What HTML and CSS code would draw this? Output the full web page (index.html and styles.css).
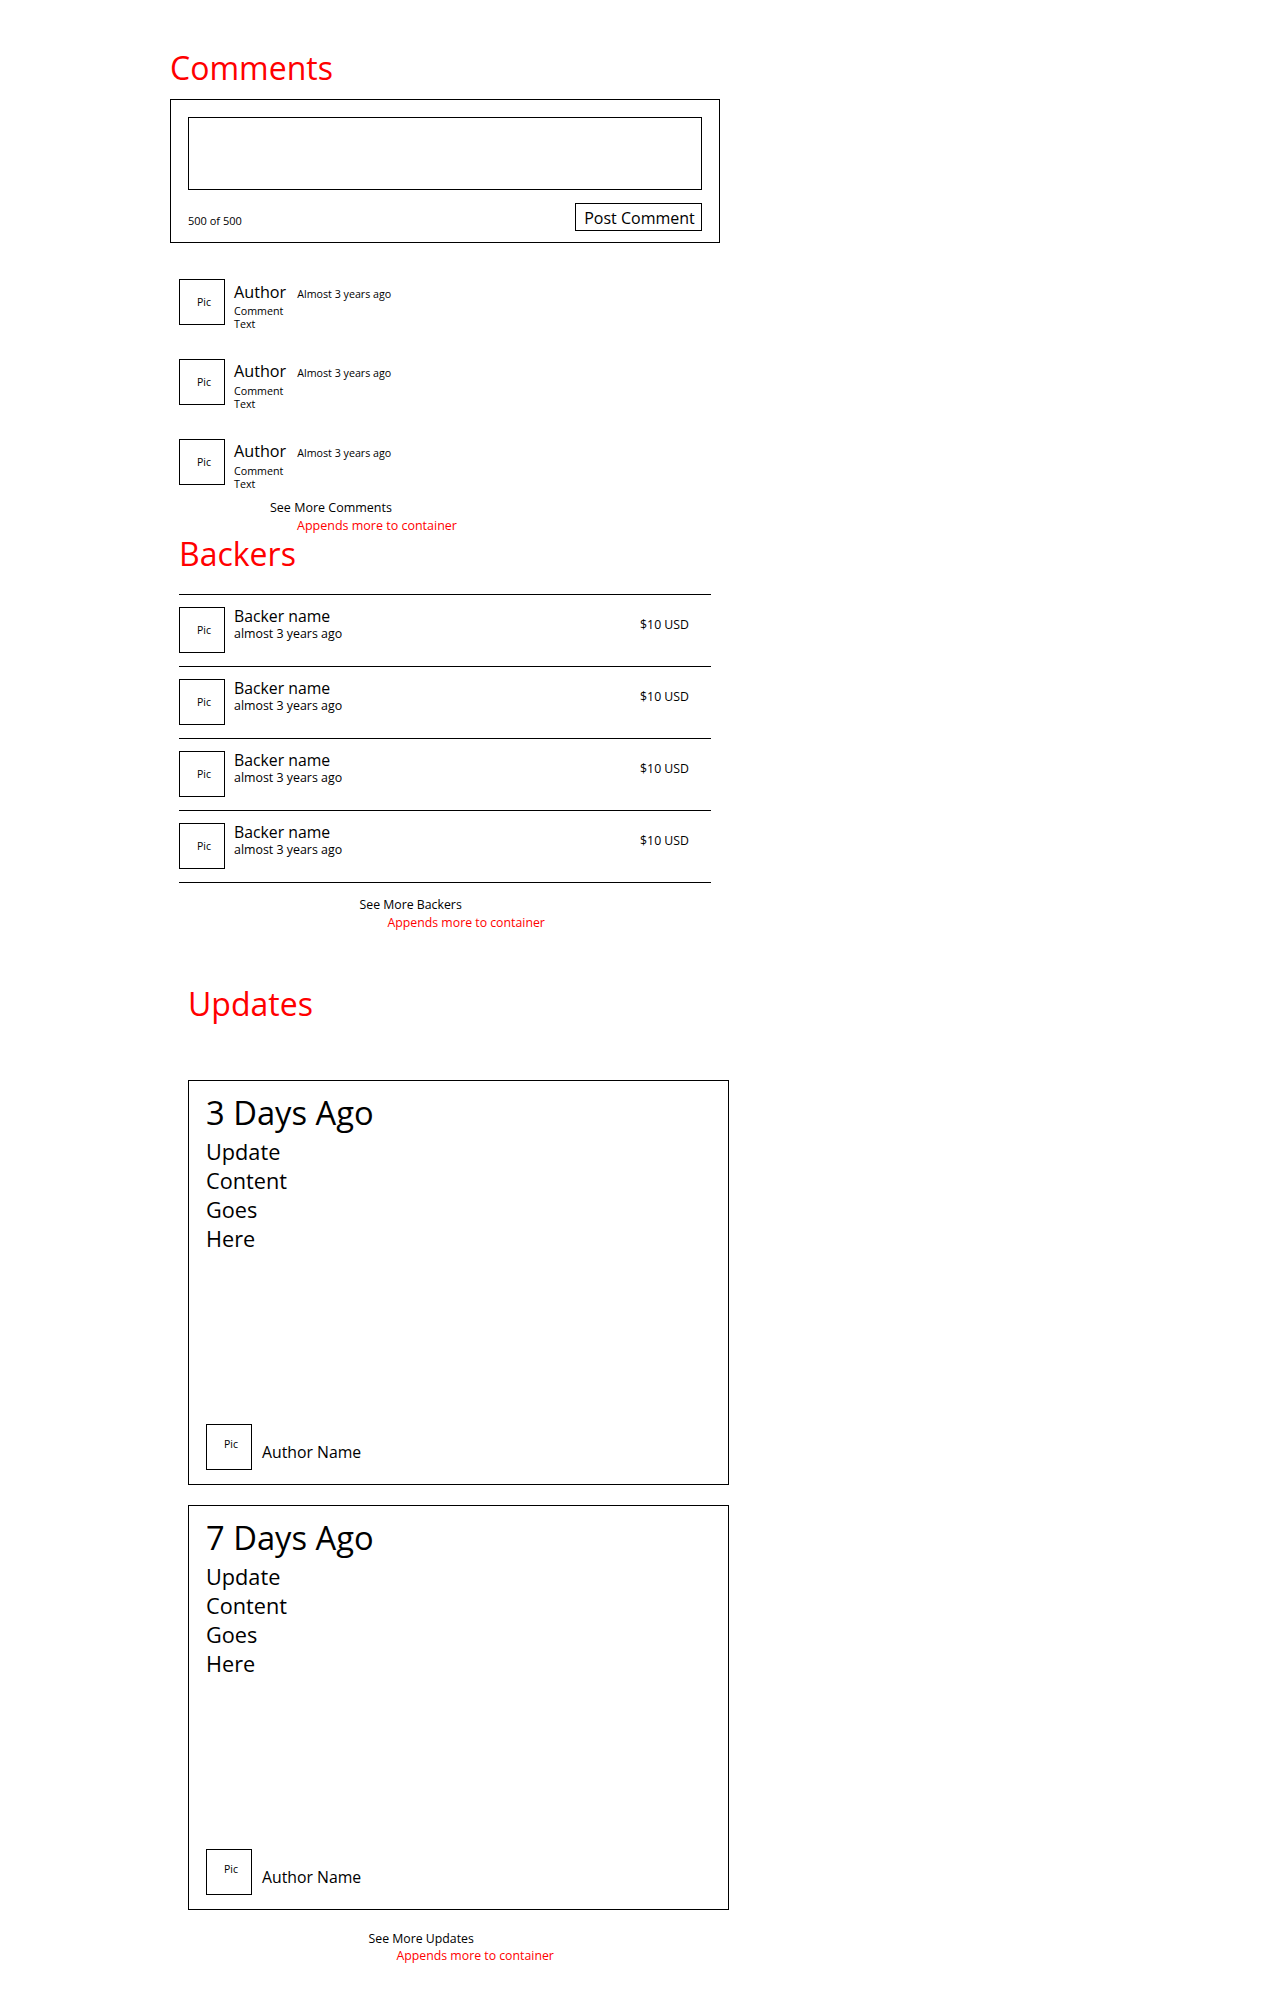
FILE: index.html
```html
<!DOCTYPE html>
<html lang="en">
<head>
<meta charset="utf-8">
<title>Project – Comments, Backers, Updates</title>
<link rel="stylesheet" href="styles.css">
</head>
<body>
<main class="page">

  <section class="section section--comments">
    <h2 class="section-title">Comments</h2>
    <form class="comment-form">
      <textarea class="comment-input" aria-label="Comment"></textarea>
      <div class="comment-form__footer">
        <span class="char-count">500 of 500</span>
        <button type="button" class="post-btn">Post Comment</button>
      </div>
    </form>

    <ul class="comment-list">
      <li class="comment">
        <div class="pic">Pic</div>
        <div class="comment__main">
          <div class="comment__head"><span class="comment__author">Author</span><span class="comment__time">Almost 3 years ago</span></div>
          <p class="comment__text">Comment Text</p>
        </div>
      </li>
      <li class="comment">
        <div class="pic">Pic</div>
        <div class="comment__main">
          <div class="comment__head"><span class="comment__author">Author</span><span class="comment__time">Almost 3 years ago</span></div>
          <p class="comment__text">Comment Text</p>
        </div>
      </li>
      <li class="comment">
        <div class="pic">Pic</div>
        <div class="comment__main">
          <div class="comment__head"><span class="comment__author">Author</span><span class="comment__time">Almost 3 years ago</span></div>
          <p class="comment__text">Comment Text</p>
        </div>
      </li>
    </ul>

    <div class="more more--comments">
      <div class="more__link">See More Comments</div>
      <div class="more__note">Appends more to container</div>
    </div>
  </section>

  <section class="section section--backers">
    <h2 class="section-title">Backers</h2>
    <ul class="backer-list">
      <li class="backer">
        <div class="pic">Pic</div>
        <div class="backer__info">
          <div class="backer__name">Backer name</div>
          <div class="backer__date">almost 3 years ago</div>
        </div>
        <div class="backer__amount">$10 USD</div>
      </li>
      <li class="backer">
        <div class="pic">Pic</div>
        <div class="backer__info">
          <div class="backer__name">Backer name</div>
          <div class="backer__date">almost 3 years ago</div>
        </div>
        <div class="backer__amount">$10 USD</div>
      </li>
      <li class="backer">
        <div class="pic">Pic</div>
        <div class="backer__info">
          <div class="backer__name">Backer name</div>
          <div class="backer__date">almost 3 years ago</div>
        </div>
        <div class="backer__amount">$10 USD</div>
      </li>
      <li class="backer">
        <div class="pic">Pic</div>
        <div class="backer__info">
          <div class="backer__name">Backer name</div>
          <div class="backer__date">almost 3 years ago</div>
        </div>
        <div class="backer__amount">$10 USD</div>
      </li>
    </ul>
    <div class="more more--wide">
      <div class="more__link">See More Backers</div>
      <div class="more__note">Appends more to container</div>
    </div>
  </section>

  <section class="section section--updates">
    <h2 class="section-title section-title--updates">Updates</h2>
    <div class="update-list">
      <article class="update">
        <h3 class="update__title">3 Days Ago</h3>
        <div class="update__body">Update<br>Content<br>Goes<br>Here</div>
        <div class="update__author">
          <div class="pic pic--high">Pic</div>
          <span class="update__name">Author Name</span>
        </div>
      </article>
      <article class="update">
        <h3 class="update__title">7 Days Ago</h3>
        <div class="update__body">Update<br>Content<br>Goes<br>Here</div>
        <div class="update__author">
          <div class="pic pic--high">Pic</div>
          <span class="update__name">Author Name</span>
        </div>
      </article>
    </div>
    <div class="more more--wide more--updates">
      <div class="more__link">See More Updates</div>
      <div class="more__note">Appends more to container</div>
    </div>
  </section>

</main>
</body>
</html>
```

FILE: styles.css
```css
* {
  box-sizing: border-box;
}

html, body {
  margin: 0;
  padding: 0;
  background: #ffffff;
}

body {
  font-family: "Open Sans", "Noto Sans", sans-serif;
  color: #000000;
}

.page {
  padding: 48px 0 40px 170px;
}

ul {
  list-style: none;
  margin: 0;
  padding: 0;
}

p, h2, h3 {
  margin: 0;
}

.section-title {
  font-size: 32px;
  line-height: 40px;
  font-weight: 400;
  color: #ff0000;
}

/* ---------- Comments ---------- */
.section--comments .section-title {
  margin-bottom: 11px;
}

.comment-form {
  width: 550px;
  height: 144px;
  border: 1px solid #000;
  padding: 17px 17px 11px;
  margin: 0;
}

.comment-input {
  display: block;
  width: 514px;
  height: 73px;
  border: 1px solid #000;
  border-radius: 0;
  padding: 4px;
  margin: 0;
  resize: none;
  outline: none;
  font-family: inherit;
  font-size: 13px;
  background: #fff;
}

.comment-form__footer {
  margin-top: 13px;
  display: flex;
  justify-content: space-between;
  align-items: flex-end;
}

.char-count {
  font-size: 11px;
  line-height: 14px;
  margin-bottom: 3px;
}

.post-btn {
  width: 127px;
  height: 28px;
  padding: 2px 0 0 2px;
  margin: 0;
  border: 1px solid #000;
  border-radius: 0;
  background: #fff;
  color: #000;
  font-family: inherit;
  font-size: 16px;
  line-height: 24px;
  text-align: center;
}

.comment-list {
  margin-top: 36px;
  padding-left: 9px;
  display: flex;
  flex-direction: column;
  gap: 27px;
}

.comment {
  display: flex;
  align-items: flex-start;
  gap: 9px;
}

.pic {
  flex: 0 0 46px;
  width: 46px;
  height: 46px;
  border: 1px solid #000;
  display: flex;
  align-items: center;
  justify-content: center;
  padding-left: 4px;
  font-size: 10.5px;
  line-height: 12px;
}

.pic--high {
  padding-bottom: 6px;
}

.comment__main {
  padding-top: 2.5px;
}

.comment__head {
  display: flex;
  align-items: baseline;
  white-space: nowrap;
}

.comment__author {
  font-size: 16.2px;
  line-height: 20px;
}

.comment__time {
  font-size: 10.7px;
  line-height: 14px;
  margin-left: 11px;
}

.comment__text {
  margin-top: 3.3px;
  width: min-content;
  font-size: 10.7px;
  line-height: 13.6px;
}

.more {
  font-size: 12.5px;
  line-height: 17.5px;
}

.more--comments {
  margin-top: 7.5px;
}

.more--comments .more__link {
  padding-left: 100px;
}

.more--comments .more__note {
  padding-left: 127px;
}

.more__note {
  color: #ff0000;
}

/* ---------- Backers ---------- */
.section--backers {
  margin-left: 9px;
}

.backer-list {
  margin-top: 20px;
  width: 532px;
  border-bottom: 1px solid #000;
}

.backer {
  display: flex;
  align-items: flex-start;
  height: 72px;
  padding-top: 12px;
  border-top: 1px solid #000;
}

.backer__info {
  margin-left: 9px;
}

.backer__name {
  font-size: 15.8px;
  line-height: 18px;
}

.backer__date {
  font-size: 12.4px;
  line-height: 18px;
}

.backer__amount {
  margin-left: auto;
  margin-right: 22px;
  margin-top: 9px;
  font-size: 12.3px;
  line-height: 18px;
}

.more--wide {
  margin-top: 13px;
  font-size: 12.3px;
}

.more--wide .more__link {
  padding-left: 180.5px;
}

.more--wide .more__note {
  padding-left: 208.5px;
}

/* ---------- Updates ---------- */
.section--updates {
  margin-left: 18px;
}

.section-title--updates {
  margin-top: 53px;
  margin-bottom: 56px;
}

.update-list {
  display: flex;
  flex-direction: column;
  gap: 20px;
}

.update {
  width: 541px;
  height: 405px;
  border: 1px solid #000;
  padding: 12px 17px 14px;
  display: flex;
  flex-direction: column;
}

.update__title {
  font-size: 32.7px;
  line-height: 40px;
  font-weight: 400;
  margin-bottom: 5px;
}

.update__body {
  font-size: 21.7px;
  line-height: 28.8px;
}

.update__author {
  margin-top: auto;
  display: flex;
  align-items: flex-end;
  gap: 10px;
}

.update__name {
  font-size: 15.8px;
  line-height: 20px;
  padding-bottom: 8px;
}

.more--updates {
  margin-top: 19.5px;
}
```
